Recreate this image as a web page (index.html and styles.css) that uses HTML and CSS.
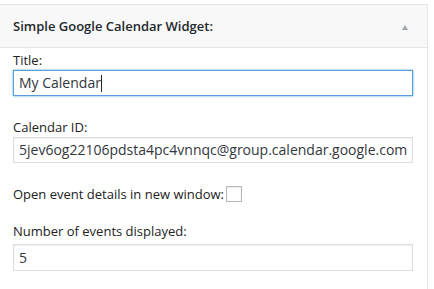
FILE: index.html
```html
<!DOCTYPE html>
<html>
<head>
<meta charset="utf-8">
<link rel="stylesheet" href="styles.css">
</head>
<body>
<div class="widget">
  <div class="widget-top">
    <h3 class="widget-title">Simple Google Calendar Widget:</h3>
    <span class="toggle"></span>
  </div>
  <div class="widget-inside">
    <p class="field">
      <label class="lbl">Title:</label>
      <span class="input focus">My Calendar<span class="caret"></span></span>
    </p>
    <p class="field">
      <label class="lbl">Calendar ID:</label>
      <span class="input">5jev6og22106pdsta4pc4vnnqc@group.calendar.google.com</span>
    </p>
    <p class="field inline">
      <label class="lbl">Open event details in new window:</label>
      <span class="check"></span>
    </p>
    <p class="field number">
      <label class="lbl">Number of events displayed:</label>
      <span class="input">5</span>
    </p>
  </div>
</div>
</body>
</html>
```
FILE: styles.css
```css
html, body {
  margin: 0;
  padding: 0;
  background: #fff;
}
body {
  font-family: "Open Sans", "Liberation Sans", sans-serif;
  color: #222;
  font-size: 13px;
}
.widget {
  margin-top: 4px;
  width: 428px;
  border-top: 1px solid #e5e5e5;
  border-right: 1px solid #e5e5e5;
  height: 285px;
  box-sizing: border-box;
}
.widget-top {
  height: 42px;
  background: #f8f8f8;
  border-bottom: 1px solid #e5e5e5;
  display: flex;
  align-items: center;
  justify-content: space-between;
  padding: 0 19px 0 13px;
}
.widget-title {
  margin: 0;
  font-size: 13px;
  font-weight: 600;
  color: #23282d;
}
.toggle {
  width: 0;
  height: 0;
  margin-top: 3px;
  border-left: 3px solid transparent;
  border-right: 3px solid transparent;
  border-bottom: 5px solid #a0a5aa;
}
.widget-inside {
  padding: 3px 14px 0 13px;
}
.field {
  margin: 0 0 22px;
}
.lbl {
  display: block;
  font-size: 13px;
  line-height: 18px;
  margin-bottom: 1px;
}
.input {
  display: block;
  box-sizing: border-box;
  width: 400px;
  height: 26px;
  border: 1px solid #ddd;
  padding: 0 5px;
  font-size: 14px;
  line-height: 24px;
  color: #32373c;
  box-shadow: inset 0 1px 2px rgba(0,0,0,0.07);
  white-space: nowrap;
}
.input.focus {
  border-color: #5b9dd9;
  box-shadow: 0 0 2px rgba(30,140,190,0.8);
}
.caret {
  display: inline-block;
  width: 1px;
  height: 17px;
  background: #222;
  vertical-align: -4px;
}
.field.inline {
  display: flex;
  align-items: center;
  margin-bottom: 19px;
}
.field.inline .lbl {
  display: inline;
  margin: 0;
}
.check {
  display: inline-block;
  width: 16px;
  height: 16px;
  box-sizing: border-box;
  border: 1px solid #b4b9be;
  margin-left: 2px;
  box-shadow: inset 0 1px 2px rgba(0,0,0,0.1);
}
.field.number .lbl {
  margin-bottom: 4px;
}
.field.number .input {
  height: 27px;
  line-height: 25px;
}
```
